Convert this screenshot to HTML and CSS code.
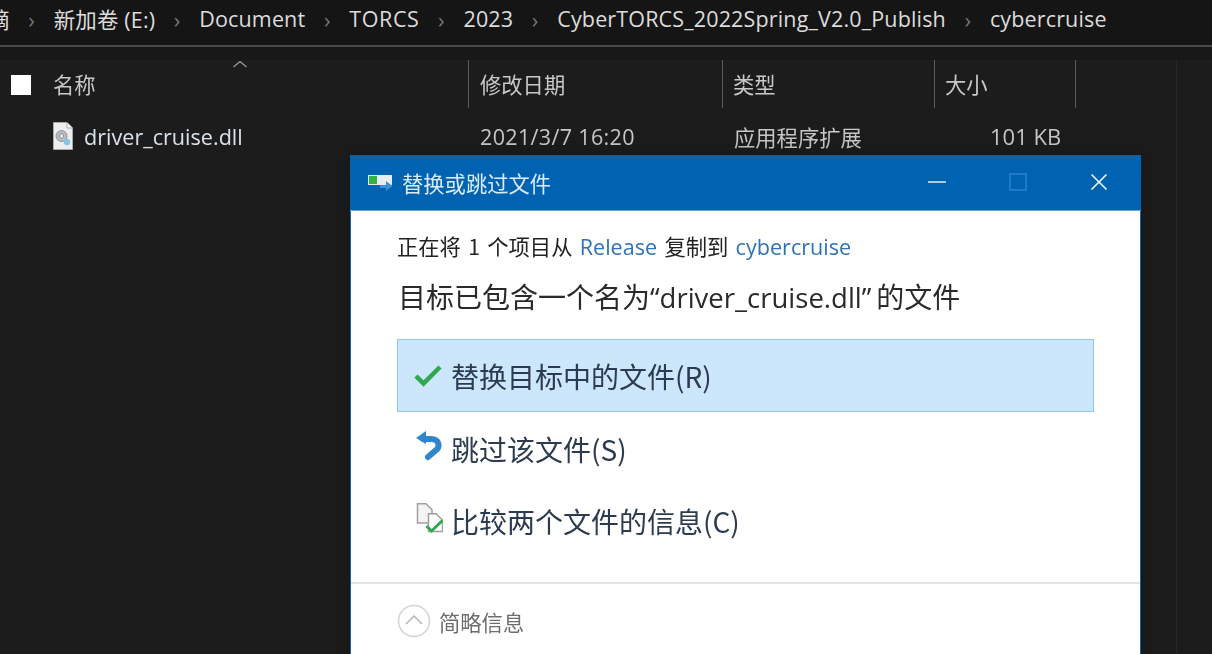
FILE: index.html
```html
<!DOCTYPE html>
<html lang="zh-CN">
<head>
<meta charset="utf-8">
<title>替换或跳过文件</title>
<link rel="stylesheet" href="styles.css">
</head>
<body>
<div class="explorer">
  <nav class="crumbs">
    <span class="crumb-cut">摘</span><span class="sep">›</span>
    <span>新加卷 (E:)</span><span class="sep">›</span>
    <span>Document</span><span class="sep">›</span>
    <span class="crumb-wide">TORCS</span><span class="sep">›</span>
    <span>2023</span><span class="sep">›</span>
    <span>CyberTORCS_2022Spring_V2.0_Publish</span><span class="sep">›</span>
    <span>cybercruise</span>
  </nav>
  <div class="band"></div>
  <div class="list">
    <div class="head">
      <span class="check"></span>
      <span class="col col-name">名称<svg class="sort" width="16" height="8" viewBox="0 0 16 8"><path d="M1.500 7 L8 1.500 L14.500 7" fill="none" stroke="#9a9a9a" stroke-width="1.300"/></svg></span>
      <span class="col col-date">修改日期</span>
      <span class="col col-type">类型</span>
      <span class="col col-size">大小</span>
    </div>
    <div class="row">
      <span class="file-cell">
        <svg class="file-icon" width="22" height="30" viewBox="0 0 22 30">
          <path d="M1.500 1.500 H15 L20.500 7 V28.500 H1.500 Z" fill="#eceef0" stroke="#a8a8a8"/>
          <path d="M15 1.500 V7 H20.500" fill="#fff" stroke="#a8a8a8"/>
          <circle cx="9.500" cy="15" r="5.500" fill="#b9bdc2" stroke="#8f949a"/>
          <circle cx="9.500" cy="15" r="2.200" fill="#e8eaec" stroke="#8f949a"/>
          <circle cx="15" cy="21" r="3.200" fill="#8ec2e2"/>
        </svg>
        <span>driver_cruise.dll</span>
      </span>
      <span class="cell-date">2021/3/7 16:20</span>
      <span class="cell-type">应用程序扩展</span>
      <span class="cell-size">101 KB</span>
    </div>
  </div>
  <div class="scroll-edge"></div>
</div>

<section class="dialog">
  <header class="titlebar">
    <svg class="title-icon" width="26" height="18" viewBox="0 0 26 18">
      <rect x="1" y="2" width="24" height="10" fill="#e6ecf0"/>
      <rect x="2" y="3" width="8" height="8" fill="#2fb344"/>
      <path d="M13 12 H19 V8 L25.500 13 L19 18 V15 H13 Z" fill="#3d8fd8"/>
    </svg>
    <span class="title-text">替换或跳过文件</span>
    <div class="win-buttons">
      <svg width="18" height="18" viewBox="0 0 18 18"><path d="M0 9 H18" stroke="#d5e6f5" stroke-width="1.600"/></svg>
      <svg width="18" height="18" viewBox="0 0 18 18"><rect x="1" y="1" width="16" height="16" fill="none" stroke="#2b83cc" stroke-width="1.500"/></svg>
      <svg width="18" height="18" viewBox="0 0 18 18"><path d="M1.500 1.500 L16.500 16.500 M16.500 1.500 L1.500 16.500" stroke="#f2f7fb" stroke-width="1.600"/></svg>
    </div>
  </header>
  <div class="dialog-body">
    <p class="summary">正在将 1 个项目从 <a>Release</a> 复制到 <a>cybercruise</a></p>
    <h2 class="question">目标已包含一个名为<span class="q-file">“driver_cruise.dll”</span>的文件</h2>
    <ul class="options">
      <li class="option selected">
        <svg width="30" height="24" viewBox="0 0 30 24"><path d="M3 13 L10.500 20.500 L27 4" fill="none" stroke="#2fa84f" stroke-width="4.500"/></svg>
        <span>替换目标中的文件(R)</span>
      </li>
      <li class="option">
        <svg width="30" height="34" viewBox="0 0 30 34"><path d="M3 7 L13 0 V13 Z" fill="#2f86cc"/><path d="M10 8 H18 C26 8 28 16 22 20 L15 26" fill="none" stroke="#2f86cc" stroke-width="6" stroke-linecap="round"/></svg>
        <span>跳过该文件(S)</span>
      </li>
      <li class="option">
        <svg width="30" height="34" viewBox="0 0 30 34">
          <path d="M4.500 0.800 H13 L19 6.800 V20 H4.500 Z" fill="#f4f4f4" stroke="#a0a0a0" stroke-width="1.500"/>
          <path d="M15.500 10.800 H23 L29.500 17 V28.500 H15.500 Z" fill="#fff" stroke="#a0a0a0" stroke-width="1.500"/>
          <path d="M13.500 23 L18.500 28 L29.500 17.500" fill="none" stroke="#2fa84f" stroke-width="3"/>
        </svg>
        <span>比较两个文件的信息(C)</span>
      </li>
    </ul>
  </div>
  <footer class="dialog-foot">
    <svg width="34" height="34" viewBox="0 0 34 34"><circle cx="17" cy="17" r="15.500" fill="none" stroke="#d4d4d4" stroke-width="1.500"/><path d="M9 20 L17 12 L25 20" fill="none" stroke="#b5b5b5" stroke-width="1.500"/></svg>
    <span>简略信息</span>
  </footer>
</section>
</body>
</html>
```

FILE: styles.css
```css
* { box-sizing: border-box; }
html, body { margin: 0; height: 100%; overflow: hidden; }
body {
  background: #1c1c1c;
  font-family: "Noto Sans CJK SC", "Open Sans", sans-serif;
  position: relative;
  filter: blur(0.45px);
}
.explorer { height: 654px; position: relative; }
.crumbs {
  height: 47px;
  background: #151515;
  border-bottom: 2px solid #4a4a4a;
  display: flex;
  align-items: center;
  color: #dcdcdc;
  font-family: "Open Sans", "Noto Sans CJK SC", sans-serif;
  font-size: 21.500px;
  letter-spacing: 0.15px;
  white-space: nowrap;
  overflow: hidden;
  padding-bottom: 8px;
  margin: 0;
}
.crumb-cut { margin-left: -12px; }
.crumb-wide { letter-spacing: 0.600px; }
.sep { color: #777; width: 44px; text-align: center; font-size: 22px; }
.band { height: 13px; background: #181818; }
.list { color: #c8c8c8; font-size: 21.300px; }
.head { display: flex; height: 48px; align-items: stretch; }
.check { width: 20px; height: 20px; background: #fff; margin: 15px 22px 0 11px; }
.col { border-right: 1px solid #5a5a5a; padding-top: 8px; position: relative; display: block; }
.col-name { width: 416px; }
.col-date { width: 254px; padding-left: 11px; }
.col-type { width: 212px; padding-left: 10px; }
.col-size { width: 141px; padding-left: 10px; }
.sort { position: absolute; left: 179px; top: 0; }
.row { display: flex; align-items: center; height: 58px; padding-bottom: 2px; font-family: "Open Sans", "Noto Sans CJK SC", sans-serif; }
.file-cell { width: 480px; padding-left: 52px; display: flex; align-items: center; gap: 10px; color: #d8e2ea; font-size: 21.600px; }
.file-icon { flex: none; }
.cell-date { width: 254px; letter-spacing: 0.35px; font-size: 21.500px; }
.cell-type { width: 256px; }
.cell-size { font-size: 22px; }
.scroll-edge { position: absolute; top: 60px; bottom: 0; left: 1176px; width: 1px; background: #262626; }
.dialog {
  position: absolute;
  left: 350px;
  top: 155px;
  width: 791px;
  height: 520px;
  background: #fff;
  border: 1px solid #0e65ae;
  border-top: 0;
  box-shadow: 0 0 20px rgba(0, 0, 0, 0.25);
}
.titlebar {
  height: 55.500px;
  margin: 0 -1px;
  background: #0063b1;
  display: flex;
  align-items: center;
  padding-left: 17px;
  border-bottom: 1px solid #6aa7d8;
  color: #dcebf7;
  font-size: 21.300px;
}
.title-icon { margin-right: 9px; }
.win-buttons { margin-left: auto; margin-right: 33px; display: flex; gap: 63px; }
.dialog-body { padding: 19px 46px 0; }
.summary { margin: 0; font-size: 21.300px; color: #222; line-height: 32px; height: 32px; word-spacing: 2.500px; white-space: nowrap; }
.summary a { color: #2f72b8; font-family: "Open Sans", sans-serif; font-size: 21.600px; word-spacing: 0; }
.question { margin: 16px 0 0 1px; font-size: 28px; font-weight: 400; color: #2a2a2a; line-height: 36px; white-space: nowrap; }
.q-file { font-family: "Open Sans", sans-serif; font-size: 27.500px; padding-right: 5px; }
.options { list-style: none; margin: 23.500px 0 0; padding: 0; width: 697px; }
.option {
  height: 72.500px;
  display: flex;
  align-items: center;
  gap: 8px;
  padding-left: 15px;
  font-size: 28px;
  color: #2d3b50;
  border: 1px solid transparent;
}
.option span { padding-top: 2px; }
.selected { background: #cce6fb; border-color: #8fc7ee; }
.dialog-foot {
  position: absolute;
  left: 0; right: 0;
  top: 427px;
  border-top: 2px solid #e4e4e4;
  padding: 20px 46px;
  display: flex;
  align-items: center;
  gap: 8px;
  color: #6e6e6e;
  font-size: 21.300px;
}
```
